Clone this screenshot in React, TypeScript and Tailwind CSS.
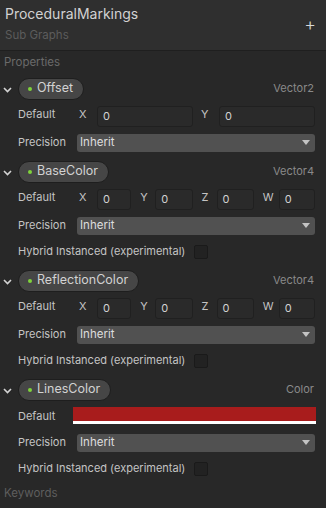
import React from "react";

type Prop = {
  name: string;
  type: string;
  kind: "vec2" | "vec4" | "color";
};

const props: Prop[] = [
  { name: "Offset", type: "Vector2", kind: "vec2" },
  { name: "BaseColor", type: "Vector4", kind: "vec4" },
  { name: "ReflectionColor", type: "Vector4", kind: "vec4" },
  { name: "LinesColor", type: "Color", kind: "color" },
];

function Chevron() {
  return (
    <svg width="9" height="6" viewBox="0 0 9 6" className="ml-[3px] mr-[6px] mt-[2px]">
      <path d="M1 1 L4.5 4.5 L8 1" stroke="#d4d4d4" strokeWidth="1.6" fill="none" />
    </svg>
  );
}

function NumField({ label, labelW }: { label: string; labelW: string }) {
  return (
    <div className="flex items-center flex-1">
      <span className={`${labelW} pl-[2px] text-[#c4c4c4] -mt-[3px]`}>{label}</span>
      <div className="flex-1 h-[21px] bg-[#2a2a2a] border border-[#202020] rounded-[3px] pl-[5px] flex items-center text-[#d2d2d2] pt-[1px]">
        0
      </div>
    </div>
  );
}

function Dropdown() {
  return (
    <div className="flex-1 h-[18px] bg-[#515151] rounded-[3px] flex items-center justify-between pl-[3px] pr-[5px] text-[#dedede] text-[11.5px]">
      <span>Inherit</span>
      <svg width="8" height="5" viewBox="0 0 8 5">
        <path d="M0 0 H8 L4 5 Z" fill="#c4c4c4" />
      </svg>
    </div>
  );
}

function Section({ p }: { p: Prop }) {
  const isColor = p.kind === "color";
  return (
    <div className="flex flex-col">
      <div className="flex items-center h-[22px]">
        <Chevron />
        <div className="h-[22px] flex items-center rounded-full bg-[#464646] border border-[#1e1e1e] pl-[9px] pr-[10px] text-[#d2d2d2] text-[12.5px]">
          <span className="w-[4px] h-[4px] rounded-full bg-[#7fd33b] mr-[5px]" />
          {p.name}
        </div>
        <span className="ml-auto mr-[12px] text-[#8a8a8a]">{p.type}</span>
      </div>

      <div className={`flex items-center pl-[18px] pr-[11px] mt-[6px] ${isColor ? "h-[17px]" : "h-[21px]"}`}>
        <span className={`${isColor ? "w-[55px] mt-[2px]" : "w-[59px] -mt-[4px]"} text-[#c4c4c4]`}>Default</span>
        {p.kind === "vec2" && (
          <div className="flex-1 flex gap-[6px]">
            <NumField label="X" labelW="w-[20px]" />
            <NumField label="Y" labelW="w-[20px]" />
          </div>
        )}
        {p.kind === "vec4" && (
          <div className="flex-1 flex gap-[7px]">
            <NumField label="X" labelW="w-[20px]" />
            <NumField label="Y" labelW="w-[17px]" />
            <NumField label="Z" labelW="w-[17px]" />
            <NumField label="W" labelW="w-[18px]" />
          </div>
        )}
        {isColor && (
          <div className="flex-1 flex flex-col mr-[-1px]">
            <div className="h-[14px] bg-[#a81c1c]" />
            <div className="h-[3px] bg-white" />
          </div>
        )}
      </div>

      <div className={`flex items-center pl-[18px] pr-[11px] ${isColor ? "mt-[10px]" : "mt-[7px]"} h-[18px]`}>
        <span className="w-[59px] text-[#c4c4c4]">Precision</span>
        <Dropdown />
      </div>

      {p.kind !== "vec2" && (
        <div className="flex items-center pl-[18px] mt-[10px] mb-[2px] h-[14px]">
          <span className="w-[176px] shrink-0 whitespace-nowrap text-[#c4c4c4]">Hybrid Instanced (experimental)</span>
          <div className="w-[14px] h-[14px] bg-[#222222] border border-[#1a1a1a] rounded-[2px]" />
        </div>
      )}
    </div>
  );
}

export default function App() {
  return (
    <div
      className="w-[326px] h-[508px] bg-[#282828] overflow-hidden text-[11px] leading-none"
      style={{ fontFamily: "Inter, 'Noto Sans', sans-serif" }}
    >
      <div className="h-[51px] bg-[#2f2f2f] border-b border-[#1f1f1f] flex px-[5px] relative">
        <div className="flex flex-col">
          <span className="text-[14px] text-[#d2d2d2] mt-[7px]">ProceduralMarkings</span>
          <span className="text-[11.5px] text-[#5c5c5c] mt-[9px]">Sub Graphs</span>
        </div>
        <span className="ml-auto mt-[16px] mr-[5px] text-[18px] text-[#d8d8d8] font-light">+</span>
      </div>

      <div className="px-[4px] pt-[6px] text-[11.5px] text-[#6a6a6a]">Properties</div>

      <div className="flex flex-col gap-[9px] mt-[9px]">
        {props.map((p) => (
          <Section key={p.name} p={p} />
        ))}
      </div>

      <div className="px-[4px] mt-[10px] text-[11.5px] text-[#5e5e5e]">Keywords</div>
    </div>
  );
}
